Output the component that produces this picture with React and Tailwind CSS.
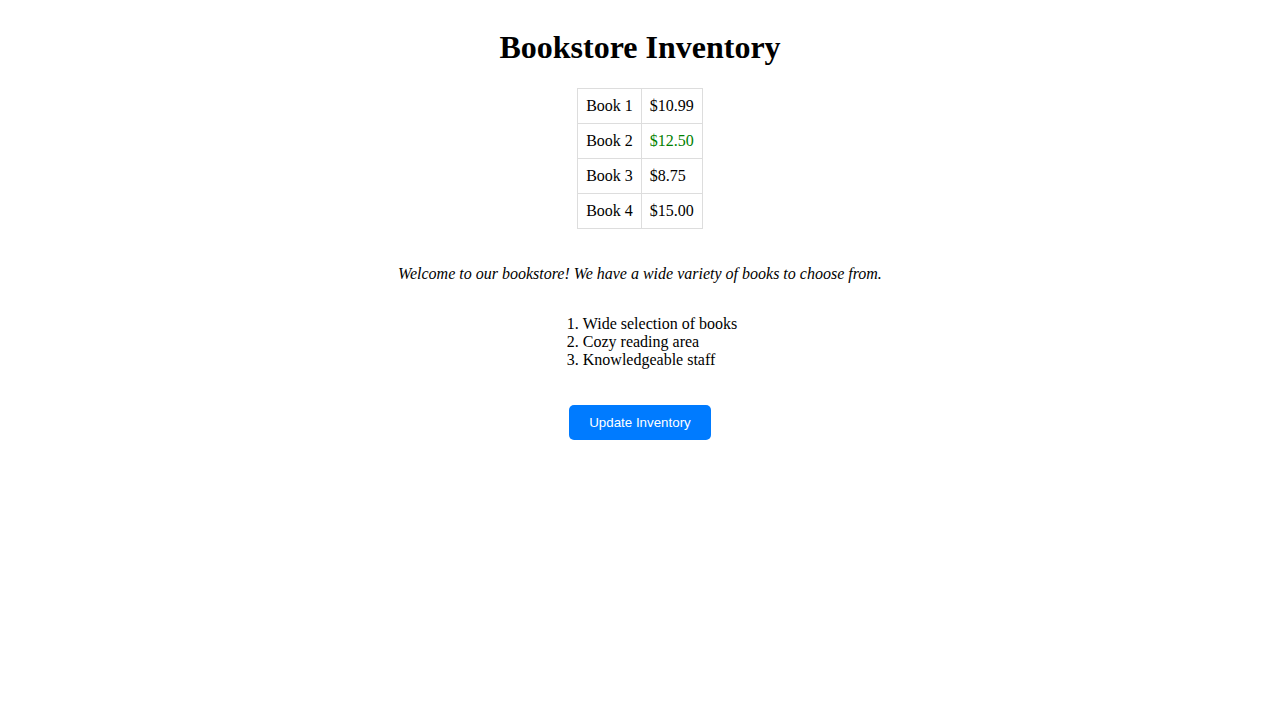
export default function App() {
  const books = [
    ["Book 1", "$10.99", false],
    ["Book 2", "$12.50", true],
    ["Book 3", "$8.75", false],
    ["Book 4", "$15.00", false],
  ];
  return (
    <div className="min-h-[720px] bg-white p-2 text-center text-black" style={{ fontFamily: '"Liberation Serif", "Times New Roman", serif' }}>
      <h1 className="mt-[21px] mb-[22px] text-[32px] font-bold leading-[37px]">Bookstore Inventory</h1>
      <table className="mx-auto border-collapse text-[16px] leading-[18px]">
        <tbody>
          {books.map(([n, p, g]) => (
            <tr key={n}>
              <td className="border border-[#dddddd] px-2 py-2 text-left">{n}</td>
              <td className={"border border-[#dddddd] px-2 py-2 text-left " + (g ? "text-[#008000]" : "")}>{p}</td>
            </tr>
          ))}
        </tbody>
      </table>
      <p className="mt-[36px] text-[16px] italic leading-[18px]">
        Welcome to our bookstore! We have a wide variety of books to choose from.
      </p>
      <ol className="mt-[32px] inline-block list-decimal pl-10 text-left text-[16px] leading-[18px]">
        <li>Wide selection of books</li>
        <li>Cozy reading area</li>
        <li>Knowledgeable staff</li>
      </ol>
      <div className="mt-[33px] flex justify-center">
        <button
          className="rounded-[5px] bg-[#007bff] px-5 py-[10px] text-[13.33px] leading-[15px] text-white"
          style={{ fontFamily: '"Liberation Sans", Arial, sans-serif' }}
        >
          Update Inventory
        </button>
      </div>
    </div>
  );
}
